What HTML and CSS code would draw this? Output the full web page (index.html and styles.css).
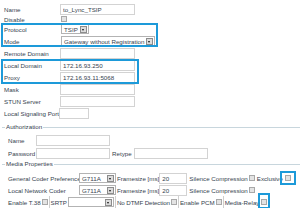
FILE: index.html
```html
<!DOCTYPE html>
<html lang="en">
  <head>
    <meta charset="utf-8">
    <title>SIP Interface</title>
    <link rel="stylesheet" href="styles.css">
  </head>
  <body>
    <div class="form">
      <div class="row"><span class="lbl">Name</span><input class="txt" value="to_Lync_TSIP"></div>
      <div class="row short"><span class="lbl">Disable</span><input type="checkbox" class="cb cb-dis"></div>

      <div class="hl hl-proto">
        <div class="row"><span class="lbl">Protocol</span><div class="sel sel-proto">TSIP<i class="arr"></i></div></div>
        <div class="row"><span class="lbl">Mode</span><div class="sel sel-mode">Gateway without Registration<i class="arr"></i></div></div>
      </div>

      <div class="row"><span class="lbl">Remote Domain</span><input class="txt"></div>

      <div class="hl hl-dom">
        <div class="row"><span class="lbl">Local Domain</span><input class="txt" value="172.16.93.250"></div>
        <div class="row"><span class="lbl">Proxy</span><input class="txt" value="172.16.93.11:5068"></div>
      </div>

      <div class="row"><span class="lbl">Mask</span><input class="txt"></div>
      <div class="row"><span class="lbl">STUN Server</span><input class="txt"></div>
      <div class="row"><span class="lbl lbl-port">Local Signaling Port</span><input class="txt txt-port"></div>

      <fieldset class="group group-auth">
        <legend>Authorization</legend>
        <div class="row inner"><span class="lbl-s">Name</span><input class="txt txt-auth"></div>
        <div class="row inner"><span class="lbl-s">Password</span><input class="txt txt-auth"><span class="retype">Retype</span><input class="txt txt-auth"></div>
      </fieldset>

      <fieldset class="group group-media">
        <legend>Media Properties</legend>
        <div class="row inner">
          <span class="lbl-m">General Coder Preference</span>
          <div class="sel sel-coder">G711A<i class="arr"></i></div>
          <span class="fs">Framesize [ms]</span><input class="txt txt-fs" value="20">
          <span class="sc">Silence Compression</span><input type="checkbox" class="cb">
          <span class="excl">Exclusive</span><span class="mark mark-excl"><input type="checkbox" class="cb"></span>
        </div>
        <div class="row inner">
          <span class="lbl-m">Local Network Coder</span>
          <div class="sel sel-coder">G711A<i class="arr"></i></div>
          <span class="fs">Framesize [ms]</span><input class="txt txt-fs" value="20">
          <span class="sc">Silence Compression</span><input type="checkbox" class="cb">
        </div>
        <div class="row inner last">
          <span>Enable T.38</span><input type="checkbox" class="cb cb-t38"><i class="sep"></i>
          <span>SRTP</span><div class="sel sel-srtp"><i class="arr"></i></div><i class="sep"></i>
          <span class="dtmf">No DTMF Detection</span><input type="checkbox" class="cb cb-b"><i class="sep"></i>
          <span>Enable PCM</span><input type="checkbox" class="cb cb-b"><i class="sep"></i>
          <span>Media-Relay</span><span class="mark mark-relay"><input type="checkbox" class="cb"></span>
        </div>
      </fieldset>
    </div>
  </body>
</html>
```

FILE: styles.css
```css
body{
  margin:0;
  background:#fff;
  font-family:"Liberation Sans", Arial, sans-serif;
  font-size:6.2px;
  color:#36434f;
}
.form{
  padding:3px 0 0 4px;
}
.row{
  display:flex;
  align-items:center;
  height:12px;
  white-space:nowrap;
}
.row.short{
  height:8px;
}
.lbl{
  width:56px;
  flex:none;
}
.lbl-port{
  width:55px;
}
.txt{
  box-sizing:border-box;
  width:75px;
  height:11px;
  margin:0;
  padding:0 2px;
  border:1px solid #d3d3d3;
  background:#fff;
  font:inherit;
  color:inherit;
  outline:none;
}
.txt-port{
  width:30px;
}
.cb{
  appearance:none;
  -webkit-appearance:none;
  box-sizing:border-box;
  width:6px;
  height:6px;
  margin:0 0 0 1px;
  border:1px solid #a8a8a8;
  background:#e3e3e3;
  flex:none;
}
.cb-dis{
  margin-left:1px;
}

/* fake select boxes */
.sel{
  box-sizing:border-box;
  display:flex;
  align-items:center;
  justify-content:space-between;
  height:10px;
  margin-left:1px;
  padding-left:2px;
  border:1px solid #b3b3b3;
  background:#fff;
  flex:none;
}
.arr{
  position:relative;
  box-sizing:border-box;
  width:7px;
  height:7px;
  margin-right:1px;
  border:1px solid #8c8c8c;
  background:#dcdcdc;
}
.arr::after{
  content:'';
  position:absolute;
  left:1px;
  top:2px;
  border-left:1.5px solid transparent;
  border-right:1.5px solid transparent;
  border-top:2px solid #111;
}
.sel-proto{ width:28px; }
.sel-mode{ width:94px; }
.sel-coder{ width:37px; margin-left:0; }
.sel-srtp{ width:46px; margin-left:1px; justify-content:flex-end; }

/* blue highlight frames */
.hl{
  position:relative;
}
.hl::after,
.mark::after{
  content:'';
  position:absolute;
  border:2px solid #1d9ad9;
}
.hl::after{
  top:0;
  bottom:0;
  left:-3px;
  right:0;
}
.hl-proto{ width:154px; }
.hl-dom{ width:135px; }
.hl-dom::after{ bottom:-1px; }

.mark{
  position:relative;
  display:flex;
}
.mark-excl{ margin-left:2px; }
.mark-excl .cb{ margin:0; }
.mark-excl::after{
  top:-4px;
  bottom:-4px;
  left:-5px;
  right:-5px;
}
.mark-relay{ margin-left:2px; }
.mark-relay .cb{ margin:0; }
.mark-relay::after{
  top:-6px;
  bottom:-4px;
  left:-3px;
  right:-3px;
}

/* fieldsets */
.group{
  min-width:0;
  margin:4px 0 0 -2px;
  padding:3px 0 0 4px;
  border:0;
  border-top:1px solid #c8d6dd;
}
.group legend{
  padding:0 1px;
  margin-left:-1px;
  line-height:8px;
}
.group-media{
  margin-top:1px;
  padding-top:4px;
}
.inner{
  margin-left:2px;
}
.inner + .inner{
  margin-top:1px;
}
.group-media .inner + .inner{
  margin-top:0;
}
.group-media .last{
  margin-top:3px;
}
.lbl-s{
  width:28px;
  flex:none;
}
.txt-auth{
  width:74px;
}
.retype{
  margin:0 2px 0 2px;
}
.lbl-m{
  width:71px;
  flex:none;
}
.fs{
  margin-left:1px;
}
.txt-fs{
  width:28px;
}
.sc{
  margin-left:2px;
}
.excl{
  margin-left:2px;
}
.cb-t38{
  margin-left:1px;
}
.cb-b{
  margin-left:1px;
}
.sep{
  width:1px;
  height:12px;
  margin:0 1px;
  background:#cfcfcf;
}
.dtmf{
  letter-spacing:-0.1px;
}
```
